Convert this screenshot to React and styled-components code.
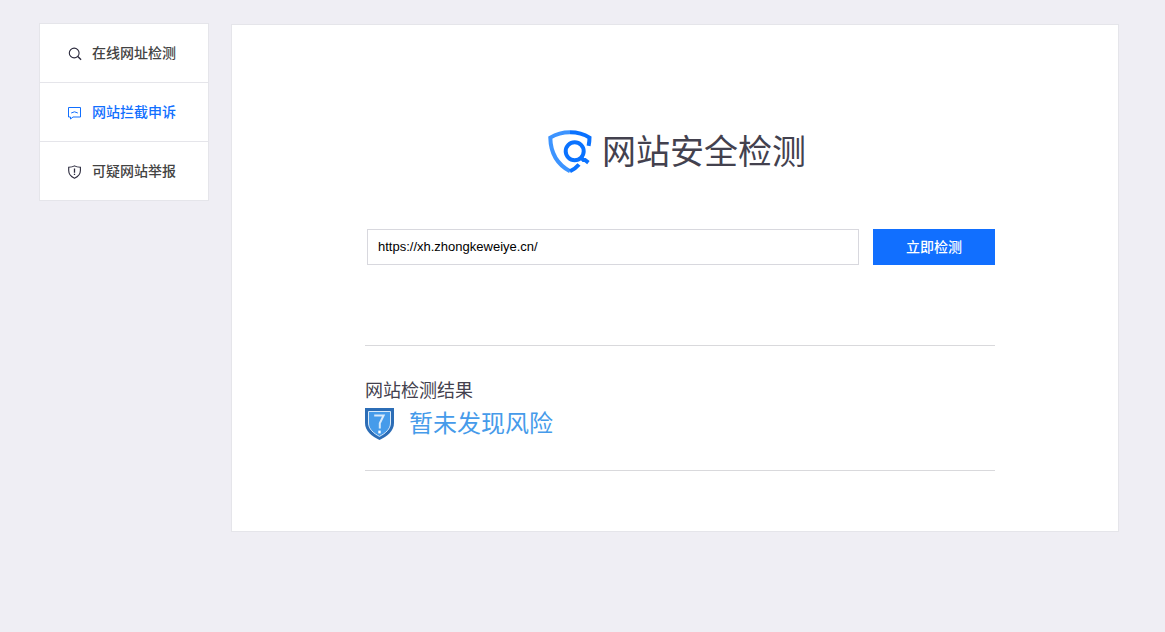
import React, { useState } from "react";
import styled, { createGlobalStyle } from "styled-components";

const GlobalStyle = createGlobalStyle`
  *, *::before, *::after { box-sizing: border-box; }
  body {
    margin: 0;
    background: #efeef4;
    color: #43414e;
    font-family: "Liberation Sans", "Noto Sans CJK SC", sans-serif;
    font-size: 14px;
  }
  h1, h2, p, ul { margin: 0; padding: 0; }
`;

const Page = styled.div`
  display: flex;
  align-items: flex-start;
  gap: 22px;
  padding: 0 46px 24px 39px;
`;

const Sidebar = styled.nav`
  flex: 0 0 170px;
  padding-top: 23px;
`;

const MenuList = styled.ul`
  list-style: none;
  background: #fff;
  border: 1px solid #e5e5ea;
`;

const MenuItem = styled.li`
  & + & { border-top: 1px solid #e5e5ea; }
`;

const MenuLink = styled.a`
  display: flex;
  align-items: center;
  gap: 10px;
  height: 58px;
  padding-left: 28px;
  font-size: 14px;
  font-weight: 500;
  line-height: 20px;
  text-decoration: none;
  color: ${(p) => (p.$active ? "#116fff" : "#434343")};

  svg {
    flex: none;
    margin-top: 2px;
    color: ${(p) => (p.$active ? "#116fff" : "#2b2a3d")};
  }
`;

const Main = styled.main`
  flex: 1;
  min-width: 0;
  padding-top: 24px;
`;

const Panel = styled.div`
  background: #fff;
  border: 1px solid #e5e5ea;
  padding: 102px 0 60px;
`;

const Brand = styled.header`
  display: flex;
  align-items: center;
  justify-content: center;
  gap: 9px;
  padding-left: 3px;
`;

const BrandTitle = styled.h1`
  font-size: 34px;
  font-weight: 400;
  line-height: 50px;
  color: #43414e;
`;

const Content = styled.div`
  padding: 52px 123px 0 133px;
`;

const SearchForm = styled.form`
  display: flex;
  gap: 14px;
  padding-left: 2px;
`;

const UrlInput = styled.input`
  flex: 1;
  min-width: 0;
  height: 36px;
  padding: 0 10px 2px;
  border: 1px solid #d8d8de;
  border-radius: 0;
  outline: none;
  background: #fff;
  color: #000;
  font-family: inherit;
  font-size: 13px;
`;

const SubmitButton = styled.button`
  flex: 0 0 122px;
  height: 36px;
  padding: 0 0 2px;
  border: 0;
  background: #116fff;
  color: #fff;
  font-family: inherit;
  font-size: 14px;
  font-weight: 500;
  cursor: pointer;
`;

const Result = styled.section`
  margin-top: 80px;
  padding: 30px 0 28px;
  border-top: 1px solid #d9d9dc;
  border-bottom: 1px solid #d9d9dc;
`;

const ResultTitle = styled.h2`
  font-size: 18px;
  font-weight: 400;
  line-height: 30px;
  color: #43414e;
`;

const Verdict = styled.p`
  display: flex;
  align-items: center;
  gap: 14px;
  font-size: 24px;
  line-height: 36px;
  color: #469bea;
`;

const SearchIcon = () => (
  <svg width="14" height="14" viewBox="0 0 14 14" fill="none" stroke="currentColor" strokeWidth="1.1" aria-hidden="true">
    <circle cx="6.2" cy="6" r="4.9" />
    <path d="M9.8 9.5 13.1 12.7" strokeWidth="1.4" />
  </svg>
);

const MessageIcon = () => (
  <svg width="14" height="14" viewBox="0 0 14 14" fill="none" stroke="currentColor" aria-hidden="true">
    <path d="M.5 1.5h12v9.5H5L2.5 13V11H.5z" />
    <path d="M3.2 7Q6.5 4.6 9.8 7" />
  </svg>
);

const AlertShieldIcon = () => (
  <svg width="14" height="14" viewBox="0 0 14 14" fill="none" stroke="currentColor" strokeWidth="1.1" aria-hidden="true">
    <path d="M6.5.9C5 1.8 2.9 2.3.7 2.3V5.5C.7 9.2 3.4 11.8 6.5 13.2 9.6 11.8 12.4 9.2 12.4 5.5V2.3C10.1 2.3 8 1.8 6.5.9Z" />
    <path d="M6.5 3.5v4.3M6.5 8.8v1.3" strokeWidth="1.3" />
  </svg>
);

const BrandIcon = () => (
  <svg width="46" height="46" viewBox="0 0 46 46" fill="none" strokeWidth="4" aria-hidden="true">
    <path d="M23 3.2C16.5 3.2 9.2 5 3.3 8.6C3.6 23.3 10.5 35.5 23 42.2" stroke="#3d94ff" />
    <path d="M23 3.2C30 3.2 37 5 42.5 8.6Q42.5 12.5 41.6 16.8" stroke="#0a72ff" />
    <path d="M23 42.3Q28.5 39.6 32 35.5" stroke="#0a72ff" />
    <circle cx="27.7" cy="22.2" r="9" stroke="#0a72ff" />
    <path d="M33.6 28 36.4 31H38L41.4 33.6" stroke="#0a72ff" />
  </svg>
);

const UnknownShieldIcon = () => (
  <svg width="30" height="34" viewBox="0 0 30 34" fill="none" aria-hidden="true">
    <path d="M0 1H29V16C29 24 22 29.5 14.5 33C7 29.5 0 24 0 16Z" fill="#2c6db6" />
    <path d="M3.5 4.5H25.5V16C25.5 22 20.5 26.3 14.5 29.4C8.5 26.3 3.5 22 3.5 16Z" fill="#469bea" stroke="#d9eafa" />
    <path d="M9.2 8.5H18.6L14.8 16.3V21.6" stroke="#d9eafa" strokeWidth="2" />
    <path d="M14.5 23.6V26.4" stroke="#fff" strokeWidth="2.4" />
  </svg>
);

const menu = [
  { label: "在线网址检测", Icon: SearchIcon },
  { label: "网站拦截申诉", Icon: MessageIcon, active: true },
  { label: "可疑网站举报", Icon: AlertShieldIcon },
];

export default function App() {
  const [url, setUrl] = useState("https://xh.zhongkeweiye.cn/");

  return (
    <>
      <GlobalStyle />
      <Page>
        <Sidebar>
          <MenuList>
            {menu.map(({ label, Icon, active }) => (
              <MenuItem key={label}>
                <MenuLink href="#" $active={active} aria-current={active ? "page" : undefined}>
                  <Icon />
                  {label}
                </MenuLink>
              </MenuItem>
            ))}
          </MenuList>
        </Sidebar>
        <Main>
          <Panel>
            <Brand>
              <BrandIcon />
              <BrandTitle>网站安全检测</BrandTitle>
            </Brand>
            <Content>
              <SearchForm onSubmit={(e) => e.preventDefault()}>
                <UrlInput
                  type="text"
                  aria-label="网址"
                  value={url}
                  onChange={(e) => setUrl(e.target.value)}
                />
                <SubmitButton type="submit">立即检测</SubmitButton>
              </SearchForm>
              <Result>
                <ResultTitle>网站检测结果</ResultTitle>
                <Verdict>
                  <UnknownShieldIcon />
                  暂未发现风险
                </Verdict>
              </Result>
            </Content>
          </Panel>
        </Main>
      </Page>
    </>
  );
}
